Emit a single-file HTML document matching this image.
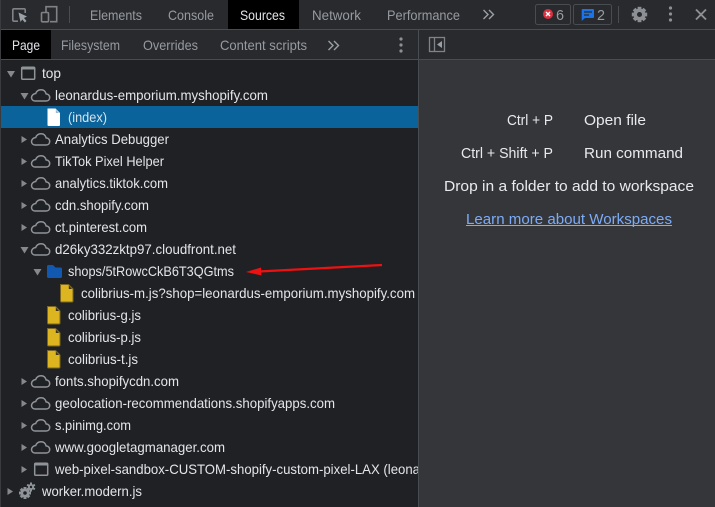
<!DOCTYPE html>
<html><head><meta charset="utf-8"><style>
html,body{margin:0;padding:0;background:#202124;width:715px;height:507px;overflow:hidden}
svg{display:block}
text{font-family:"Liberation Sans",sans-serif;font-size:14px;fill:#e3e5e9}
.t{fill:#969ba1}
.r{font-size:15px;fill:#e8eaed}
</style></head><body>
<svg width="715" height="507" viewBox="0 0 715 507" xmlns="http://www.w3.org/2000/svg">
<defs>
<path id="cloud" d="M-1 1 H10 C12.500 1 13.700 -0.500 13.700 -2.500 C13.700 -4.700 12 -6 10.200 -6 C9.500 -8.700 7.500 -10.300 5 -10.300 C2.500 -10.300 0.500 -8.800 -0.300 -6.500 C-3 -6.300 -4.500 -4.200 -4.500 -2.400 C-4.500 -0.500 -3 1 -1 1 Z" fill="none" stroke="#8f9499" stroke-width="1.500"/>
<path id="file" d="M0.500 0.500 H8.500 L13 5 V17 Q13 18 12 18 H1.500 Q0.500 18 0.500 17 Z"/>
<path id="fold" d="M8.800 1.500 L12 5 H8.800 Z"/>
</defs>

<rect x="0" y="0" width="715" height="507" fill="#202124"/>
<rect x="0" y="0" width="715" height="29" fill="#292a2d"/>
<rect x="0" y="29" width="715" height="1" fill="#494c50"/>
<rect x="0" y="30" width="418" height="29" fill="#292a2d"/>
<rect x="0" y="59" width="418" height="1" fill="#494c50"/>
<rect x="419" y="30" width="296" height="29" fill="#292a2d"/>
<rect x="419" y="59" width="296" height="1" fill="#494c50"/>
<rect x="419" y="60" width="296" height="447" fill="#35363a"/>
<rect x="418" y="30" width="1" height="477" fill="#494c50"/>
<rect x="0" y="0" width="1" height="507" fill="#3a3b3f"/>

<!-- Top toolbar icons -->
<path d="M18 21.200 H14 Q12.800 21.200 12.800 20 V10 Q12.800 8.800 14 8.800 H24 Q25.200 8.800 25.200 10 V13" fill="none" stroke="#7f8388" stroke-width="1.600"/>
<path d="M18.500 12.500 L27 16.500 L24 18 L26.500 21 L24.800 22.500 L22.300 19.500 L20.500 22 Z" fill="#9aa0a6"/>
<path d="M46 12 V6.700 H56.700 V21.700 H50" fill="none" stroke="#7f8388" stroke-width="1.600"/>
<rect x="41.500" y="12.500" width="7" height="9.300" rx="1" fill="#292a2d" stroke="#7f8388" stroke-width="1.600"/>
<rect x="69" y="6" width="1" height="17" fill="#494c50"/>

<rect x="228" y="0" width="71" height="29" fill="#000"/>
<text class="t" x="90" y="20" textLength="52" lengthAdjust="spacingAndGlyphs">Elements</text>
<text class="t" x="168" y="20" textLength="46" lengthAdjust="spacingAndGlyphs">Console</text>
<text x="240" y="20" textLength="45" lengthAdjust="spacingAndGlyphs">Sources</text>
<text class="t" x="312" y="20" textLength="49" lengthAdjust="spacingAndGlyphs">Network</text>
<text class="t" x="387" y="20" textLength="73" lengthAdjust="spacingAndGlyphs">Performance</text>
<path d="M483.500 10 L488 14.500 L483.500 19 M489 10 L493.500 14.500 L489 19" fill="none" stroke="#9aa0a6" stroke-width="1.400"/>

<!-- Badges -->
<rect x="535.500" y="4.500" width="35" height="20" rx="2" fill="none" stroke="#494c50"/>
<circle cx="548" cy="14" r="5" fill="#dc3040"/>
<path d="M546 12 L550 16 M550 12 L546 16" stroke="#fff" stroke-width="1.400"/>
<text class="t" x="556" y="20" textLength="8" lengthAdjust="spacingAndGlyphs" style="font-size:15px">6</text>
<rect x="573.500" y="4.500" width="38" height="20" rx="2" fill="none" stroke="#494c50"/>
<path d="M582.500 9 H593 Q594 9 594 10 V17 Q594 18 593 18 H585 L581.700 21 V10 Q581.700 9 582.500 9 Z" fill="#1a73e8"/>
<path d="M584 12 H592 M584 15 H589" stroke="#292a2d" stroke-width="1.200"/>
<text class="t" x="597" y="20" textLength="8" lengthAdjust="spacingAndGlyphs" style="font-size:15px">2</text>
<rect x="618" y="6" width="1" height="17" fill="#494c50"/>

<!-- Gear -->
<g transform="translate(639.500 14.500)" fill="#8c9095">
<rect x="-1.900" y="-7.700" width="3.800" height="15.400"/><rect x="-1.900" y="-7.700" width="3.800" height="15.400" transform="rotate(45)"/><rect x="-1.900" y="-7.700" width="3.800" height="15.400" transform="rotate(90)"/><rect x="-1.900" y="-7.700" width="3.800" height="15.400" transform="rotate(135)"/>
<circle r="6"/><circle r="2.500" fill="#292a2d"/>
</g>
<circle cx="670.500" cy="8" r="1.600" fill="#8c9095"/><circle cx="670.500" cy="14" r="1.600" fill="#8c9095"/><circle cx="670.500" cy="20" r="1.600" fill="#8c9095"/>
<path d="M696 9.500 L706 19.500 M706 9.500 L696 19.500" stroke="#8c9095" stroke-width="1.900"/>

<!-- Second toolbar -->
<rect x="1" y="30" width="50" height="29" fill="#000"/>
<text x="12" y="50" textLength="28" lengthAdjust="spacingAndGlyphs">Page</text>
<text class="t" x="61" y="50" textLength="59" lengthAdjust="spacingAndGlyphs">Filesystem</text>
<text class="t" x="143" y="50" textLength="55" lengthAdjust="spacingAndGlyphs">Overrides</text>
<text class="t" x="220" y="50" textLength="87" lengthAdjust="spacingAndGlyphs">Content scripts</text>
<path d="M328.500 41 L333 45.500 L328.500 50 M334 41 L338.500 45.500 L334 50" fill="none" stroke="#9aa0a6" stroke-width="1.400"/>
<circle cx="401" cy="39" r="1.600" fill="#8c9095"/><circle cx="401" cy="45" r="1.600" fill="#8c9095"/><circle cx="401" cy="51" r="1.600" fill="#8c9095"/>
<rect x="429.500" y="37.500" width="15" height="14" fill="none" stroke="#7f8388" stroke-width="1.300"/>
<path d="M434.500 37.500 V51.500" stroke="#7f8388" stroke-width="1.300"/>
<path d="M442 41 V48 L437 44.500 Z" fill="#9aa0a6"/>

<!-- Selected row -->
<rect x="1" y="106" width="417" height="22" fill="#0b639c"/>

<!-- Arrows -->
<g fill="#85898e">
<path d="M7 71 H15 L11 77.500 Z"/>
<path d="M20.500 93 H28.500 L24.500 99.500 Z"/>
<path d="M21.500 136 L27 139.500 L21.500 143 Z"/>
<path d="M21.500 158 L27 161.500 L21.500 165 Z"/>
<path d="M21.500 180 L27 183.500 L21.500 187 Z"/>
<path d="M21.500 202 L27 205.500 L21.500 209 Z"/>
<path d="M21.500 224 L27 227.500 L21.500 231 Z"/>
<path d="M20.500 247 H28.500 L24.500 253.500 Z"/>
<path d="M33.500 269 H41.500 L37.500 275.500 Z"/>
<path d="M21.500 378 L27 381.500 L21.500 385 Z"/>
<path d="M21.500 400 L27 403.500 L21.500 407 Z"/>
<path d="M21.500 422 L27 425.500 L21.500 429 Z"/>
<path d="M21.500 444 L27 447.500 L21.500 451 Z"/>
<path d="M21.500 466 L27 469.500 L21.500 473 Z"/>
<path d="M7.500 488 L13 491.500 L7.500 495 Z"/>
</g>

<!-- Frame icons -->
<rect x="21.700" y="67.200" width="13" height="12" rx="1" fill="none" stroke="#8f9499" stroke-width="1.500"/>
<rect x="21.700" y="67.200" width="13" height="2.300" fill="#8f9499"/>
<rect x="34.700" y="463.200" width="13" height="12" rx="1" fill="none" stroke="#8f9499" stroke-width="1.500"/>
<rect x="34.700" y="463.200" width="13" height="2.300" fill="#8f9499"/>

<!-- Clouds -->
<use href="#cloud" x="36" y="100"/>
<use href="#cloud" x="36" y="144"/>
<use href="#cloud" x="36" y="166"/>
<use href="#cloud" x="36" y="188"/>
<use href="#cloud" x="36" y="210"/>
<use href="#cloud" x="36" y="232"/>
<use href="#cloud" x="36" y="254"/>
<use href="#cloud" x="36" y="386"/>
<use href="#cloud" x="36" y="408"/>
<use href="#cloud" x="36" y="430"/>
<use href="#cloud" x="36" y="452"/>

<!-- Files -->
<use href="#file" x="47" y="108" fill="#ffffff"/>
<use href="#fold" x="47" y="108" fill="#9ab8d0"/>
<g fill="#dcb521" stroke="#7a6620" stroke-width="1">
<use href="#file" x="60" y="284"/>
<use href="#file" x="47" y="306"/>
<use href="#file" x="47" y="328"/>
<use href="#file" x="47" y="350"/>
</g>
<g fill="#3a3518">
<use href="#fold" x="60" y="284"/>
<use href="#fold" x="47" y="306"/>
<use href="#fold" x="47" y="328"/>
<use href="#fold" x="47" y="350"/>
</g>

<!-- Folder -->
<path d="M47 266.500 Q47 265 48.500 265 H53 L55.500 267.500 H60.500 Q62 267.500 62 269 V276.500 Q62 278 60.500 278 H48.500 Q47 278 47 276.500 Z" fill="#1058b0"/>

<!-- Gears worker -->
<g transform="translate(31 487)" fill="#8f9499">
<rect x="-1" y="-4.500" width="2" height="9"/><rect x="-1" y="-4.500" width="2" height="9" transform="rotate(60)"/><rect x="-1" y="-4.500" width="2" height="9" transform="rotate(120)"/><circle r="3"/><circle r="1.200" fill="#202124"/>
</g>
<g transform="translate(25 493)" fill="#8f9499">
<rect x="-1.500" y="-6" width="3" height="12"/><rect x="-1.500" y="-6" width="3" height="12" transform="rotate(45)"/><rect x="-1.500" y="-6" width="3" height="12" transform="rotate(90)"/><rect x="-1.500" y="-6" width="3" height="12" transform="rotate(135)"/><circle r="4.500"/><circle r="1.800" fill="#202124"/>
</g>

<!-- Tree labels -->
<text x="42" y="78" textLength="19" lengthAdjust="spacingAndGlyphs">top</text>
<text x="55" y="100" textLength="213" lengthAdjust="spacingAndGlyphs">leonardus-emporium.myshopify.com</text>
<text x="68" y="122" textLength="39" lengthAdjust="spacingAndGlyphs" style="fill:#d5e3ee">(index)</text>
<text x="55" y="144" textLength="114" lengthAdjust="spacingAndGlyphs">Analytics Debugger</text>
<text x="55" y="166" textLength="109" lengthAdjust="spacingAndGlyphs">TikTok Pixel Helper</text>
<text x="55" y="188" textLength="113" lengthAdjust="spacingAndGlyphs">analytics.tiktok.com</text>
<text x="55" y="210" textLength="94" lengthAdjust="spacingAndGlyphs">cdn.shopify.com</text>
<text x="55" y="232" textLength="92" lengthAdjust="spacingAndGlyphs">ct.pinterest.com</text>
<text x="55" y="254" textLength="181" lengthAdjust="spacingAndGlyphs">d26ky332zktp97.cloudfront.net</text>
<text x="68" y="276" textLength="166" lengthAdjust="spacingAndGlyphs">shops/5tRowcCkB6T3QGtms</text>
<text x="81" y="298" textLength="334" lengthAdjust="spacingAndGlyphs">colibrius-m.js?shop=leonardus-emporium.myshopify.com</text>
<text x="68" y="320" textLength="73" lengthAdjust="spacingAndGlyphs">colibrius-g.js</text>
<text x="68" y="342" textLength="73" lengthAdjust="spacingAndGlyphs">colibrius-p.js</text>
<text x="68" y="364" textLength="70" lengthAdjust="spacingAndGlyphs">colibrius-t.js</text>
<text x="55" y="386" textLength="124" lengthAdjust="spacingAndGlyphs">fonts.shopifycdn.com</text>
<text x="55" y="408" textLength="280" lengthAdjust="spacingAndGlyphs">geolocation-recommendations.shopifyapps.com</text>
<text x="55" y="430" textLength="76" lengthAdjust="spacingAndGlyphs">s.pinimg.com</text>
<text x="55" y="452" textLength="170" lengthAdjust="spacingAndGlyphs">www.googletagmanager.com</text>
<svg x="0" y="455" width="418" height="30"><text x="55" y="19" textLength="365" lengthAdjust="spacingAndGlyphs">web-pixel-sandbox-CUSTOM-shopify-custom-pixel-LAX (leona</text></svg>
<text x="42" y="496" textLength="100" lengthAdjust="spacingAndGlyphs">worker.modern.js</text>

<!-- Red arrow -->
<path d="M382 265 L259 271.500" stroke="#ee1111" stroke-width="2.200"/>
<path d="M246 272 L261 267.500 L261.500 275.500 Z" fill="#ee1111"/>

<!-- Right panel -->
<text class="r" x="507" y="125" textLength="46" lengthAdjust="spacingAndGlyphs">Ctrl + P</text>
<text class="r" x="584" y="125" textLength="62" lengthAdjust="spacingAndGlyphs">Open file</text>
<text class="r" x="461" y="158" textLength="92" lengthAdjust="spacingAndGlyphs">Ctrl + Shift + P</text>
<text class="r" x="584" y="158" textLength="99" lengthAdjust="spacingAndGlyphs">Run command</text>
<text class="r" x="444" y="191" textLength="250" lengthAdjust="spacingAndGlyphs">Drop in a folder to add to workspace</text>
<text class="r" x="466" y="224" textLength="206" lengthAdjust="spacingAndGlyphs" style="fill:#7cacf8">Learn more about Workspaces</text>
<rect x="466" y="225" width="206" height="1" fill="#7cacf8"/>
</svg>
</body></html>
